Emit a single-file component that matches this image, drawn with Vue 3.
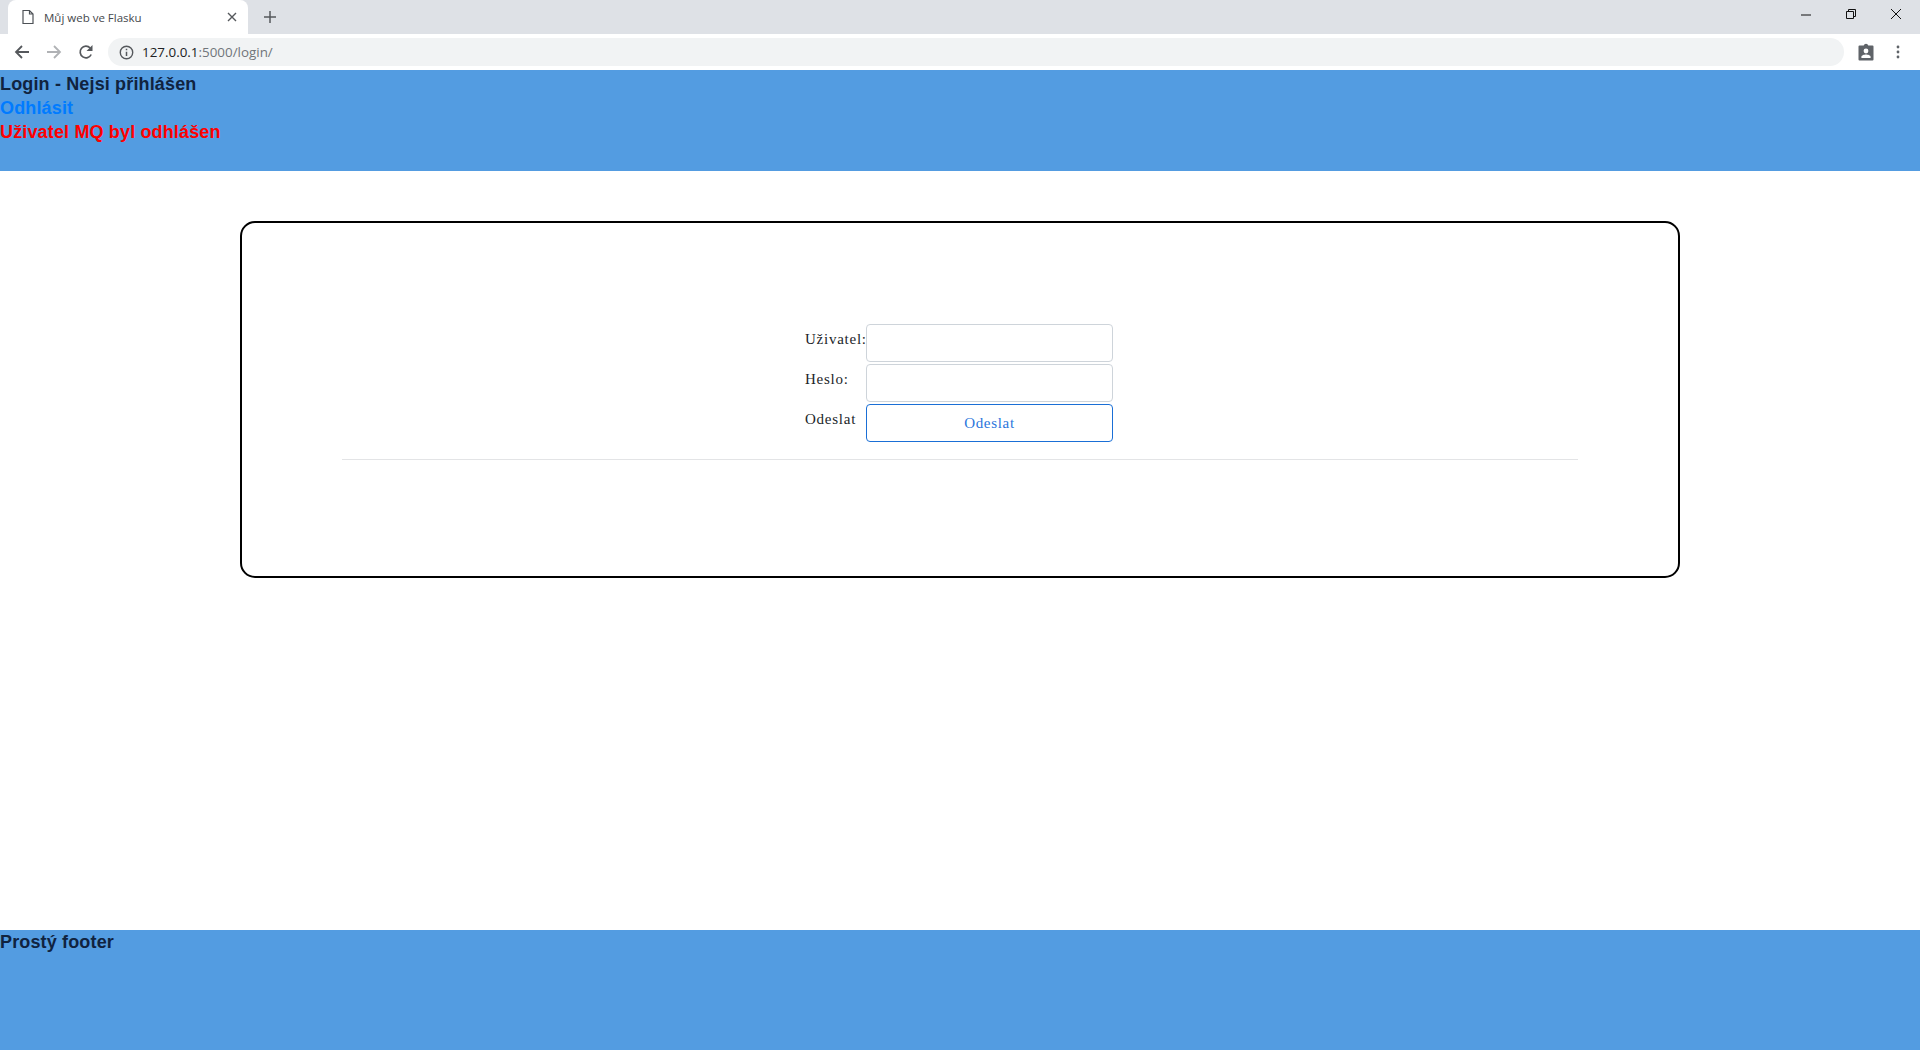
<script setup>
const rows = [
  { label: 'Uživatel:', type: 'text' },
  { label: 'Heslo:', type: 'password' }
]
</script>

<template>
  <div class="window">
    <div class="tabstrip">
      <div class="tab">
        <svg class="tab-icon" viewBox="0 0 16 16" width="16" height="16">
          <path d="M3 1.5h6.5L13 5v9.5H3z M9.5 1.5V5H13" fill="none" stroke="#4d5156" stroke-width="1.2" />
        </svg>
        <span class="tab-title">Můj web ve Flasku</span>
        <svg class="tab-close" viewBox="0 0 10 10" width="10" height="10">
          <path d="M1 1l8 8M9 1l-8 8" stroke="#55585c" stroke-width="1.4" />
        </svg>
      </div>
      <svg class="new-tab" viewBox="0 0 12 12" width="12" height="12">
        <path d="M6 0v12M0 6h12" stroke="#55585c" stroke-width="1.5" />
      </svg>
      <div class="window-btns">
        <svg viewBox="0 0 12 12" width="12" height="12"><path d="M1 7h10" stroke="#111" stroke-width="1" /></svg>
        <svg viewBox="0 0 12 12" width="12" height="12"><path d="M1.5 3.5h7v7h-7z M3.5 3.5v-2h7v7h-2" fill="none" stroke="#111" stroke-width="1" /></svg>
        <svg viewBox="0 0 12 12" width="12" height="12"><path d="M1 1l10 10M11 1L1 11" stroke="#111" stroke-width="1" /></svg>
      </div>
    </div>

    <div class="toolbar">
      <svg class="nav" viewBox="0 0 16 16" width="16" height="16">
        <path d="M15 8H2M8 2L2 8l6 6" fill="none" stroke="#55585c" stroke-width="1.8" />
      </svg>
      <svg class="nav" viewBox="0 0 16 16" width="16" height="16">
        <path d="M1 8h13M8 2l6 6-6 6" fill="none" stroke="#b0b2b5" stroke-width="1.8" />
      </svg>
      <svg class="nav" viewBox="0 0 16 16" width="16" height="16">
        <path d="M13.2 10.5A5.8 5.8 0 1 1 12.2 4" fill="none" stroke="#55585c" stroke-width="1.7" />
        <path d="M14.5 1v6h-6z" fill="#55585c" />
      </svg>
      <div class="omnibox">
        <svg viewBox="0 0 14 14" width="15" height="15">
          <circle cx="7" cy="7" r="5.8" fill="none" stroke="#55585c" stroke-width="1.3" />
          <path d="M7 6.2v4M7 3.6v1.4" stroke="#55585c" stroke-width="1.4" />
        </svg>
        <span class="url"><span class="host">127.0.0.1</span>:5000/login/</span>
      </div>
      <svg class="profile" viewBox="0 0 16 18" width="16" height="18">
        <path d="M1.5 2.5h4.2a2.4 2.4 0 0 1 4.6 0h4.2a1 1 0 0 1 1 1v13a1 1 0 0 1-1 1h-13a1 1 0 0 1-1-1v-13a1 1 0 0 1 1-1z" fill="#5f6368" />
        <circle cx="8" cy="8" r="2.4" fill="#fff" />
        <path d="M3.4 15v-1.2c0-1.6 3-2.4 4.6-2.4s4.6.8 4.6 2.4V15z" fill="#fff" />
      </svg>
      <svg class="menu" viewBox="0 0 4 14" width="4" height="14">
        <circle cx="2" cy="2" r="1.4" fill="#5f6368" />
        <circle cx="2" cy="7" r="1.4" fill="#5f6368" />
        <circle cx="2" cy="12" r="1.4" fill="#5f6368" />
      </svg>
    </div>

    <header class="site-header">
      <div>Login - Nejsi přihlášen</div>
      <a class="logout" href="#">Odhlásit</a>
      <div class="flash">Uživatel MQ byl odhlášen</div>
    </header>

    <main class="content">
      <section class="card">
        <form class="login-form" @submit.prevent>
          <template v-for="row in rows" :key="row.label">
            <label class="field-label">{{ row.label }}</label>
            <input class="field" :type="row.type" />
          </template>
          <span class="field-label send-label">Odeslat</span>
          <button class="send" type="submit">Odeslat</button>
        </form>
        <hr class="divider" />
      </section>
    </main>

    <footer class="site-footer">Prostý footer</footer>
  </div>
</template>

<style scoped>
.window {
  display: flex;
  flex-direction: column;
  height: 1050px;
  overflow: hidden;
  background: #fff;
}

.tabstrip {
  display: flex;
  align-items: center;
  height: 34px;
  flex-shrink: 0;
  background: #dee1e6;
  padding-left: 8px;
}
.tab {
  display: flex;
  align-items: center;
  width: 240px;
  height: 34px;
  box-sizing: border-box;
  padding: 0 11px 0 12px;
  background: #fff;
  border-radius: 8px 8px 0 0;
}
.tab-title {
  flex: 1;
  margin-left: 8px;
  font: 11.5px "Open Sans", sans-serif;
  color: #45484c;
}
.new-tab {
  margin-left: 16px;
}
.window-btns {
  display: flex;
  gap: 33px;
  margin-left: auto;
  margin-right: 18px;
  margin-top: -6px;
}

.toolbar {
  display: flex;
  align-items: center;
  height: 36px;
  flex-shrink: 0;
  background: #fff;
  padding-left: 14px;
}
.nav {
  margin-right: 16px;
}
.omnibox {
  display: flex;
  align-items: center;
  gap: 8px;
  width: 1736px;
  height: 28px;
  margin-left: -2px;
  padding-left: 11px;
  box-sizing: border-box;
  background: #f1f3f4;
  border-radius: 14px;
}
.url {
  font: 13.4px "Open Sans", sans-serif;
  color: #70757a;
}
.host {
  color: #202124;
}
.profile {
  margin-left: 14px;
}
.menu {
  margin-left: 22px;
}

.site-header {
  height: 101px;
  box-sizing: border-box;
  padding-top: 2px;
  flex-shrink: 0;
  background: #539ce1;
  color: #10233f;
  font: bold 18px/24px "Liberation Sans", Arial, sans-serif;
  letter-spacing: 0.15px;
}
.logout {
  display: block;
  color: #007bff;
  text-decoration: none;
}
.flash {
  color: #f00;
}

.content {
  flex: 1;
  padding-top: 50px;
}
.card {
  width: 1440px;
  height: 357px;
  box-sizing: border-box;
  margin: 0 auto;
  padding: 101px 100px 0;
  border: 2px solid #000;
  border-radius: 15px;
}
.login-form {
  display: grid;
  grid-template-columns: 61px 247px;
  grid-auto-rows: 38px;
  row-gap: 2px;
  justify-content: center;
  margin-right: 2px;
  font: 15px "Liberation Serif", serif;
  color: #212529;
}
.field-label {
  line-height: 30px;
  letter-spacing: 0.75px;
  white-space: nowrap;
}
.field {
  border: 1px solid #ced4da;
  border-radius: 4px;
  background: #fff;
  box-sizing: border-box;
  width: 100%;
  height: 100%;
  padding: 0;
}
.send {
  border: 1px solid #1a6fd6;
  border-radius: 4px;
  background: #fff;
  color: #2a75dc;
  font: 15px "Liberation Serif", serif;
  letter-spacing: 0.7px;
  box-sizing: border-box;
}
.divider {
  margin: 17px 0 0;
  border: 0;
  border-top: 1px solid #e3e4e6;
}

.site-footer {
  height: 120px;
  flex-shrink: 0;
  background: #539ce1;
  color: #10233f;
  font: bold 18px/24px "Liberation Sans", Arial, sans-serif;
  letter-spacing: 0.15px;
}
</style>
